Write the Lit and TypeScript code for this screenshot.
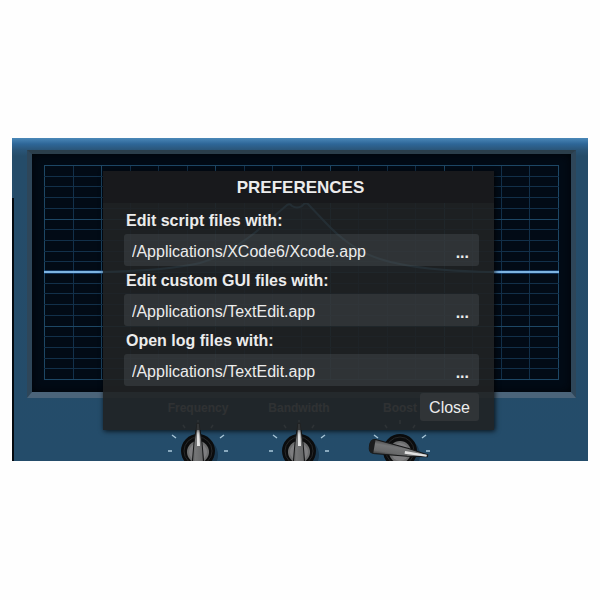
import { LitElement, html, css, svg } from "lit";
import { customElement, property } from "lit/decorators.js";

@customElement("eq-graph")
class EqGraph extends LitElement {
  static styles = css`
    :host { display: block; height: 216px; }
    svg { display: block; width: 100%; height: 100%; overflow: visible; }
    .line { stroke: #12304a; stroke-width: 1; }
    .strong { stroke: #1d4765; }
    .curve { fill: none; stroke: #4fa8e0; stroke-opacity: 0.9; stroke-width: 2; }
    .glow { stroke: #1f62b0; stroke-width: 4; stroke-opacity: 0.45; }
    .flat { stroke: #7db4e2; stroke-width: 2; }
    .area { fill: #2878aa; fill-opacity: 0.22; }
    line, path { vector-effect: non-scaling-stroke; }
  `;

  render() {
    const columns = Array.from({ length: 19 }, (_, i) => i);
    const rows = Array.from({ length: 21 }, (_, i) => i);
    const bell =
      "M59 107 C100 106 130 104 156 98 C170 94 178 90 189 83 C200 76 206 72 214 65 L243 40 Q246 38 248 41 Q253 44 258 41 Q261 37 264 39 L281 57 Q293 70 306 79 Q320 89 336 94 Q345 97 356 99 Q390 106 449 107";
    return html`<svg viewBox="0 0 515 216" preserveAspectRatio="none" aria-hidden="true">
      ${columns.map((i) => {
        const x = Math.round((i * 514) / 18) + 0.5;
        return svg`<line class="line ${i % 4 === 2 || i === 0 || i === 18 ? "strong" : ""}" x1=${x} x2=${x} y1="0" y2="215" />`;
      })}
      ${rows.map((i) => {
        const y = Math.round((i * 214) / 20) + 0.5;
        return svg`<line class="line ${i % 5 === 0 ? "strong" : ""}" y1=${y} y2=${y} x1="0" x2="515" />`;
      })}
      <path class="area" d="${bell} Z" />
      <path class="curve" d=${bell} />
      <line class="glow" x1="0" x2="59" y1="107" y2="107" />
      <line class="glow" x1="449" x2="515" y1="107" y2="107" />
      <line class="flat" x1="0" x2="59" y1="107" y2="107" />
      <line class="flat" x1="449" x2="515" y1="107" y2="107" />
    </svg>`;
  }
}

@customElement("eq-knob")
class EqKnob extends LitElement {
  @property() label = "";
  @property({ type: Number }) angle = 0;

  static styles = css`
    :host {
      display: flex;
      flex-direction: column;
      align-items: center;
      width: 101px;
    }
    .label {
      font: bold 12px/16px "Liberation Sans", Arial, sans-serif;
      color: #b4b9bd;
    }
    svg { display: block; width: 80px; height: 45px; overflow: visible; }
    .tick { stroke: #a9c8da; stroke-width: 1.4; }
  `;

  render() {
    return html`<span class="label">${this.label}</span>
      <svg viewBox="-40 -35 80 45" role="img" aria-label=${this.label}>
        <defs>
          <linearGradient id="grip" x1="0" x2="1" y1="0" y2="0">
            <stop offset="0" stop-color="#4a4b4c" />
            <stop offset="0.3" stop-color="#757677" />
            <stop offset="0.75" stop-color="#68696a" />
            <stop offset="1" stop-color="#38393a" />
          </linearGradient>
        </defs>
        <path class="tick" d="M-26-16l4 3M26-16l-4 3M-30 0h4M30 0h-4M-15-26l2 3M15-26l-2 3M0-31v4" />
        <ellipse cx="3" cy="4" rx="17" ry="17" fill="#102638" opacity="0.5" />
        <circle r="17" fill="#0b0c0d" />
        <circle r="14" fill="none" stroke="#272829" />
        <circle r="11" cy="1" fill="#6c6d6e" />
        <circle r="9" cy="1" fill="#8a8b8c" opacity="0.6" />
        <g transform="rotate(${this.angle})">
          <path d="M-1-28H1L4-8 7 26Q7 31 0 31T-7 26L-4-8z" fill="url(#grip)" stroke="#161718" stroke-width="1" />
          <path d="M-1-27H1L2-5H-1z" fill="#e2e2e2" />
          <path d="M-7 26h14v1q0 4-7 4t-7-4z" fill="#1c1d1e" />
        </g>
      </svg>`;
  }
}

@customElement("file-field")
class FileField extends LitElement {
  @property() label = "";
  @property() path = "";

  static styles = css`
    :host { display: block; }
    label {
      display: block;
      padding: 2px 2px 0;
      font-weight: bold;
      line-height: 26px;
    }
    .box {
      display: flex;
      height: 32px;
      border-radius: 3px;
      background: rgba(88, 92, 95, 0.32);
    }
    input, button {
      margin: 0;
      border: 0;
      background: none;
      color: #ececec;
      font: inherit;
    }
    input { flex: 1; min-width: 0; padding: 3px 0 0 8px; outline: none; }
    button { padding: 5px 10px 0; font-weight: bold; }
  `;

  render() {
    return html`<label for="path">${this.label}</label>
      <div class="box">
        <input id="path" type="text" spellcheck="false" .value=${this.path} />
        <button type="button" title="Browse">...</button>
      </div>`;
  }
}

@customElement("app-root")
class AppRoot extends LitElement {
  static styles = css`
    :host {
      display: block;
      min-height: 100vh;
      box-sizing: border-box;
      padding: 138px 12px;
      background: #fefefe;
      font: 16px/20px "Liberation Sans", Arial, sans-serif;
    }
    .plugin {
      position: relative;
      overflow: hidden;
      padding-top: 12px;
      background: linear-gradient(#4a88b8, #2e6697 6px, #2a5578 12px, #254c69 18px, #244c6a);
    }
    .plugin::before {
      content: "";
      position: absolute;
      inset: 60px auto 0 0;
      width: 2px;
      background: #04090f;
    }
    .screen {
      margin: 0 12px 0 15px;
      border: 5px solid;
      border-top-width: 4px;
      border-bottom-width: 6px;
      border-color: #2b3e4b #2e4659 #4b647a #2e4659;
      padding: 11px 12px;
      background: #020b16;
      box-shadow: inset 0 0 10px #000408;
    }
    .knobs {
      display: flex;
      justify-content: center;
      padding: 2px 2px 0 0;
    }
    .dialog {
      position: absolute;
      inset: 33px 3px auto 0;
      width: min(391px, 100%);
      margin: 0 auto;
      color: #ececec;
      background: rgba(32, 34, 36, 0.9);
      box-shadow: 1px 1px 5px rgba(0, 0, 0, 0.8);
    }
    h1 {
      margin: 0;
      padding: 2px 0 0 4px;
      background: #18191c;
      font-size: 17px;
      line-height: 30px;
      text-align: center;
    }
    form {
      display: flex;
      flex-direction: column;
      padding: 3px 15px 9px 21px;
    }
    .close {
      align-self: flex-end;
      height: 28px;
      margin-top: 7px;
      padding: 2px 9px 0;
      border: 0;
      border-radius: 3px;
      background: #303437;
      color: #ececec;
      font: inherit;
    }
  `;

  render() {
    return html`<main class="plugin">
      <div class="screen"><eq-graph></eq-graph></div>
      <div class="knobs">
        <eq-knob label="Frequency"></eq-knob>
        <eq-knob label="Bandwidth"></eq-knob>
        <eq-knob label="Boost" angle="100"></eq-knob>
      </div>
      <section class="dialog" role="dialog" aria-labelledby="title">
        <h1 id="title">PREFERENCES</h1>
        <form @submit=${(e: Event) => e.preventDefault()}>
          <file-field label="Edit script files with:" path="/Applications/XCode6/Xcode.app"></file-field>
          <file-field label="Edit custom GUI files with:" path="/Applications/TextEdit.app"></file-field>
          <file-field label="Open log files with:" path="/Applications/TextEdit.app"></file-field>
          <button class="close" type="button">Close</button>
        </form>
      </section>
    </main>`;
  }
}
